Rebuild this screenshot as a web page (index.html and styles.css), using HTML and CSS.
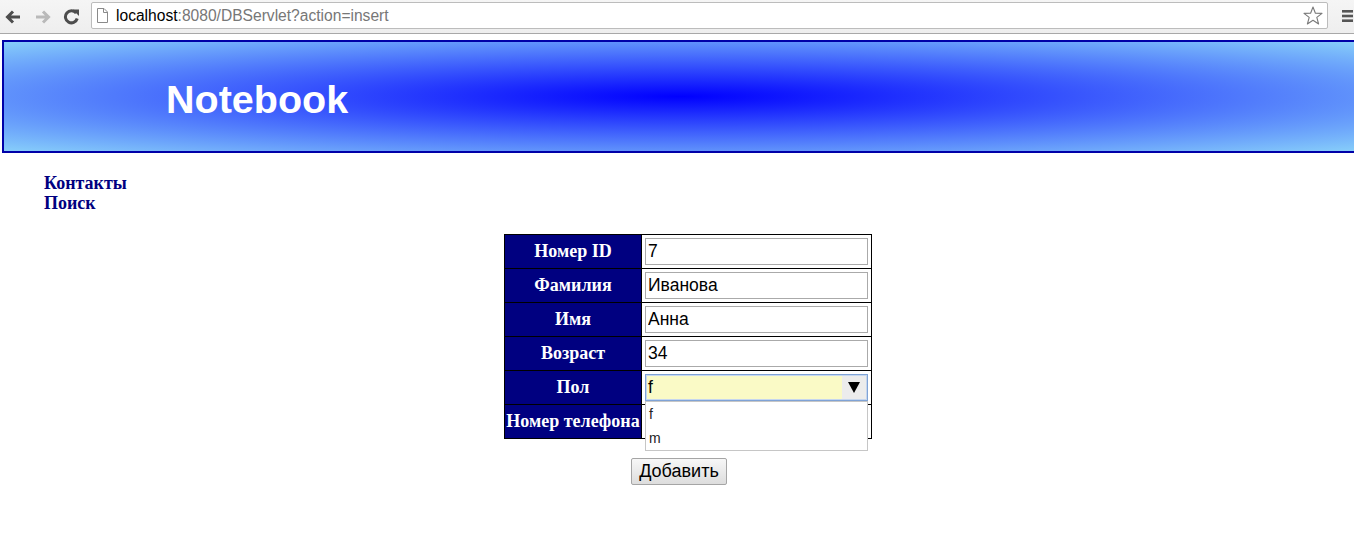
FILE: index.html
```html
<!DOCTYPE html>
<html lang="ru">
<head>
<meta charset="utf-8">
<title>Notebook</title>
<link rel="stylesheet" href="styles.css">
</head>
<body>
<div class="toolbar">
  <span class="tb-icon back">
    <svg width="16" height="14" viewBox="0 0 16 14"><path d="M15 7H3M8 1.5L2.5 7L8 12.5" fill="none" stroke="#4d4d4d" stroke-width="3"/></svg>
  </span>
  <span class="tb-icon fwd">
    <svg width="16" height="14" viewBox="0 0 16 14"><path d="M1 7H13M8 1.5L13.5 7L8 12.5" fill="none" stroke="#b9b9b9" stroke-width="3"/></svg>
  </span>
  <span class="tb-icon reload">
    <svg width="17" height="17" viewBox="0 0 17 17"><path d="M13.2 5.2A6 6 0 1 0 14.2 10.5" fill="none" stroke="#4d4d4d" stroke-width="3"/><path d="M9.5 1.5L16 1.5L16 8Z" fill="#4d4d4d"/></svg>
  </span>
  <div class="omnibox">
    <svg class="page-ico" width="11" height="15" viewBox="0 0 11 15"><path d="M0.5 0.5H7L10.5 4V14.5H0.5Z" fill="#fff" stroke="#8a8a8a"/><path d="M6.5 0.5V4.5H10.5" fill="none" stroke="#8a8a8a"/></svg>
    <span class="url"><span class="host">localhost</span>:8080/DBServlet?action=insert</span>
    <svg class="star" width="20" height="19" viewBox="0 0 20 19"><path d="M10 1L12.4 7.2L19 7.4L13.8 11.4L15.6 18L10 14.2L4.4 18L6.2 11.4L1 7.4L7.6 7.2Z" fill="none" stroke="#7a7a7a" stroke-width="1.1" stroke-linejoin="round"/></svg>
  </div>
  <span class="tb-icon menu">
    <svg width="11" height="12" viewBox="0 0 11 12"><rect x="0" y="0" width="11" height="2.6" fill="#555"/><rect x="0" y="4.7" width="11" height="2.6" fill="#555"/><rect x="0" y="9.4" width="11" height="2.6" fill="#555"/></svg>
  </span>
</div>

<div class="page">
  <header class="banner">
    <h1 class="banner-title">Notebook</h1>
  </header>

  <nav class="side-nav">
    <a href="#" class="side-link">Контакты</a>
    <a href="#" class="side-link">Поиск</a>
  </nav>

  <form class="record-form">
    <table class="record-table">
      <tr>
        <td class="label">Номер ID</td>
        <td class="field"><input class="text-input" type="text" value="7"></td>
      </tr>
      <tr>
        <td class="label">Фамилия</td>
        <td class="field"><input class="text-input" type="text" value="Иванова"></td>
      </tr>
      <tr>
        <td class="label">Имя</td>
        <td class="field"><input class="text-input" type="text" value="Анна"></td>
      </tr>
      <tr>
        <td class="label">Возраст</td>
        <td class="field"><input class="text-input" type="text" value="34"></td>
      </tr>
      <tr>
        <td class="label">Пол</td>
        <td class="field">
          <div class="select-wrap">
            <div class="select-box">
              <span class="select-value">f</span>
              <span class="select-arrow"><span class="tri"></span></span>
            </div>
            <div class="select-popup">
              <div class="opt">f</div>
              <div class="opt">m</div>
            </div>
          </div>
        </td>
      </tr>
      <tr>
        <td class="label">Номер телефона</td>
        <td class="field"><input class="text-input" type="text" value=""></td>
      </tr>
    </table>
    <div class="actions">
      <button type="button" class="submit-btn">Добавить</button>
    </div>
  </form>
</div>
</body>
</html>
```

FILE: styles.css
```css
html {
  overflow-x: hidden;
}

body {
  margin: 0;
  background: #fff;
  font-family: "Liberation Serif", "Times New Roman", serif;
}

/* ---------- browser toolbar ---------- */
.toolbar {
  display: flex;
  align-items: center;
  height: 33px;
  background: linear-gradient(#f5f5f5, #eeeeee);
  border-bottom: 1px solid #a8a8a8;
}

.tb-icon {
  display: flex;
  align-items: center;
}

.back {
  margin-left: 5px;
}

.fwd {
  margin-left: 14px;
}

.reload {
  margin-left: 12px;
  margin-top: -1px;
}

.omnibox {
  display: flex;
  align-items: center;
  box-sizing: border-box;
  width: 1237px;
  height: 27px;
  margin-left: 11px;
  margin-top: -2px;
  background: #fff;
  border: 1px solid #bcbcbc;
  border-radius: 2px;
}

.page-ico {
  margin-left: 5px;
  flex: none;
}

.url {
  margin-left: 8px;
  font-family: "Liberation Sans", Arial, sans-serif;
  font-size: 15.6px;
  color: #777;
  flex: 1;
  white-space: nowrap;
}

.host {
  color: #000;
}

.star {
  margin-right: 4px;
  flex: none;
}

.menu {
  margin-left: 14px;
  margin-top: -1px;
}

/* ---------- page ---------- */
.page {
  width: 1358px;
}

.banner {
  box-sizing: border-box;
  width: 1356px;
  height: 113px;
  margin: 6px 0 0 2px;
  border: 2px solid #0000a8;
  background: radial-gradient(ellipse farthest-corner at 50% 50%, #0000ff 0%, #87cefa 100%);
  display: flex;
  align-items: center;
}

.banner-title {
  margin: 0 0 0 162px;
  padding-top: 5px;
  font-family: "Liberation Sans", Arial, sans-serif;
  font-size: 39.5px;
  font-weight: bold;
  color: #fff;
}

.side-nav {
  display: flex;
  flex-direction: column;
  align-items: flex-start;
  margin: 20px 0 0 44px;
}

.side-link {
  font-size: 18px;
  line-height: 20px;
  font-weight: bold;
  color: #000080;
  text-decoration: none;
}

.record-form {
  display: flex;
  flex-direction: column;
  align-items: center;
  margin-top: 21px;
}

.record-table {
  border-collapse: collapse;
  margin-left: 18px;
}

.record-table td {
  border: 1px solid #000;
  padding: 1px;
}

.label {
  box-sizing: border-box;
  width: 137px;
  background: #000080;
  color: #fff;
  font-size: 18px;
  font-weight: bold;
  text-align: center;
  white-space: nowrap;
}

.field {
  width: 227px;
  background: #fff;
}

.text-input {
  display: block;
  box-sizing: border-box;
  width: 223px;
  height: 27px;
  margin: 2px;
  padding: 0 2px;
  border: 1px solid #aaaaaa;
  font-family: "Liberation Sans", Arial, sans-serif;
  font-size: 17.5px;
  color: #000;
  background: #fff;
  outline: none;
}

.select-wrap {
  position: relative;
  width: 223px;
  margin: 2px;
}

.select-box {
  box-sizing: border-box;
  display: flex;
  align-items: center;
  height: 27px;
  border: 1px solid #7fa3d6;
  box-shadow: inset 0 0 0 1px #c5d6ee;
  background: #fafac6;
}

.select-value {
  flex: 1;
  padding-left: 2px;
  font-family: "Liberation Sans", Arial, sans-serif;
  font-size: 17.5px;
  color: #000;
}

.select-arrow {
  display: flex;
  align-items: center;
  justify-content: center;
  width: 24px;
  height: 23px;
  margin-right: 1px;
  background: #ececec;
}

.tri {
  width: 0;
  height: 0;
  border-left: 6px solid transparent;
  border-right: 6px solid transparent;
  border-top: 11px solid #000;
}

.select-popup {
  position: absolute;
  top: 100%;
  left: 0;
  right: 0;
  z-index: 2;
  background: #fff;
  border: 1px solid #c6c6c6;
}

.opt {
  height: 24px;
  line-height: 24px;
  padding-left: 3px;
  font-family: "Liberation Sans", Arial, sans-serif;
  font-size: 14px;
  color: #222;
}

.actions {
  margin-top: 19px;
}

.submit-btn {
  box-sizing: border-box;
  height: 27px;
  padding: 0 7px;
  border: 1px solid #a5a5a5;
  border-radius: 2px;
  background: linear-gradient(#f7f7f7, #dddddd);
  font-family: "Liberation Sans", Arial, sans-serif;
  font-size: 18px;
  color: #000;
}
```
